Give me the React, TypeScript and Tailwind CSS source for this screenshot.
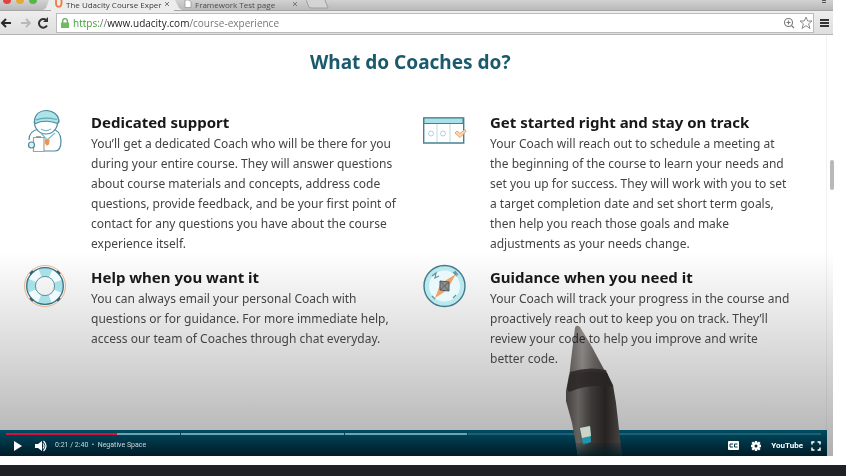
import React from "react";

function CoachIcon() {
  return (
    <svg viewBox="0 0 44 44" className="h-11 w-11" fill="none" stroke="#4d8a9b" strokeWidth="1.2">
      <path d="M5 31c0-6 4-10 10-11h13c6 1 9 5 9 12 0 6-2 10-6 10H14" fill="#fff" />
      <circle cx="22" cy="13.500" r="11.500" fill="#fff" />
      <path d="M10.500 12C11 5 16 1.500 22.500 1.500S34 6 34.500 10c1 2 .5 3.500-1 4.500-6-2.500-15-3.500-22 0-1.500-.5-1.500-1.500-1-2.500z" fill="#aee3ea" />
      <path d="M12 11c6-2.500 14-2 21-.5" stroke="#64a9b6" />
      <path d="M17 20c3 2 7 2 10 0" stroke="#79bac7" />
      <path d="M17 24l6 7 8-7" stroke="#77bdc8" />
      <path d="M21.500 31h3.500l-.5 4-1.500 1-1.500-2z" fill="#ee9448" stroke="#ee9448" />
      <path d="M9.500 28.500h10.500v14H9.500z" fill="#fff" stroke="#a8a09b" />
      <path d="M12 28h5" stroke="#8e8e8e" strokeWidth="1.600" />
      <circle cx="7.500" cy="36" r="3" fill="#d7f4f7" />
    </svg>
  );
}

function RingIcon() {
  return (
    <svg viewBox="0 0 44 44" className="h-11 w-11" fill="none">
      <circle cx="21" cy="22" r="20.500" stroke="#eab394" />
      <circle cx="21" cy="22" r="14" stroke="#effbfc" strokeWidth="9" />
      <circle cx="21" cy="22" r="14" stroke="#a9dfe7" strokeWidth="9" strokeDasharray="11 11" strokeDashoffset="5.500" />
      <circle cx="21" cy="22" r="18.300" stroke="#387282" strokeWidth="1.300" />
      <circle cx="21" cy="22" r="9.600" stroke="#58929e" strokeWidth="1" />
      <path d="M6 10l3-3M33 7l3 3M6 34l3 3M33 37l3-3" stroke="#315f6d" strokeWidth="2" />
    </svg>
  );
}

function CalendarIcon() {
  return (
    <svg viewBox="0 0 44 44" className="h-11 w-11" fill="none">
      <path d="M.7 9h40v25H.7z" fill="#fff" stroke="#438290" strokeWidth="1.400" />
      <path d="M1 9h39v5.500H1z" fill="#a8e2e8" stroke="#438290" />
      <path d="M14 15v18M27 15v18" stroke="#b9dce1" />
      <circle cx="8" cy="24.500" r="2.500" stroke="#b4cbe0" />
      <circle cx="20" cy="24.500" r="2.500" stroke="#b4cbe0" />
      <path d="M32 24l2-2 3 2.500 5-4 1 2-6 6z" fill="#fbd9b8" stroke="#eaa261" />
    </svg>
  );
}

function CompassIcon() {
  return (
    <svg viewBox="0 0 44 44" className="h-11 w-11" fill="none">
      <circle cx="21.500" cy="22" r="20.500" fill="#b9e8ee" stroke="#43798a" strokeWidth="1.400" />
      <circle cx="21.500" cy="22" r="15.500" fill="#e9f8fa" />
      <path d="M12 34l5-13 6 6zM33 10L20 18l5 6z" fill="#f2a267" />
      <path d="M17 17l9 1v9l-9-1z" fill="#8b8d90" stroke="#56595e" />
      <path d="M17 17l9 10M26 18l-9 8" stroke="#55595d" strokeWidth=".8" />
      <path d="M9 12l4-3-1 5 4-2M30 8l3 3-1-4 3 4M9 32l3 3M30 34l3-3" stroke="#69909a" strokeWidth="1.200" />
    </svg>
  );
}

type Feature = { title: string; lines: string[]; Icon: () => React.JSX.Element };

const features: Feature[] = [
  {
    title: "Dedicated support",
    Icon: CoachIcon,
    lines: [
      "You’ll get a dedicated Coach who will be there for you",
      "during your entire course. They will answer questions",
      "about course materials and concepts, address code",
      "questions, provide feedback, and be your first point of",
      "contact for any questions you have about the course",
      "experience itself.",
    ],
  },
  {
    title: "Get started right and stay on track",
    Icon: CalendarIcon,
    lines: [
      "Your Coach will reach out to schedule a meeting at",
      "the beginning of the course to learn your needs and",
      "set you up for success. They will work with you to set",
      "a target completion date and set short term goals,",
      "then help you reach those goals and make",
      "adjustments as your needs change.",
    ],
  },
  {
    title: "Help when you want it",
    Icon: RingIcon,
    lines: [
      "You can always email your personal Coach with",
      "questions or for guidance. For more immediate help,",
      "access our team of Coaches through chat everyday.",
    ],
  },
  {
    title: "Guidance when you need it",
    Icon: CompassIcon,
    lines: [
      "Your Coach will track your progress in the course and",
      "proactively reach out to keep you on track. They’ll",
      "review your code to help you improve and write",
      "better code.",
    ],
  },
];

function Browser() {
  return (
    <header className="font-['Open_Sans',sans-serif]">
      <div className="flex h-[11px] items-start border-b border-[#a5a5a5] bg-gradient-to-b from-[#d2d2d2] to-[#b9b9b9]">
        <div className="flex w-[43px] gap-[5px] pl-[3px]">
          <span className="h-1 w-2 rounded-b-full bg-[#e0443e]" />
          <span className="h-1 w-2 rounded-b-full bg-[#e6a935]" />
          <span className="h-1 w-2 rounded-b-full bg-[#55b748]" />
        </div>
        <svg viewBox="0 0 8 10" className="h-2.5 w-2"><path d="M8 0H6L3 8 0 10h8z" fill="#ececec" /></svg>
        <div className="flex h-[11px] w-[123px] items-start bg-[#ececec] pl-1 text-[8px] leading-[9px] text-[#3c3c3c]">
          <svg viewBox="0 0 8 8" className="mr-[3px] h-2 w-2 shrink-0" fill="none" stroke="#ee7b43" strokeWidth="1.800"><path d="M1 0v3c0 5 5.500 5 5.500 0V0" /></svg>
          <span className="flex-1 whitespace-nowrap">The Udacity Course Exper</span>
          <button aria-label="Close tab" className="mr-1 text-[#777]">
            <svg viewBox="0 0 6 6" className="mt-px h-1.5 w-1.5" stroke="currentColor"><path d="M1 1l4 4M5 1L1 5" /></svg>
          </button>
        </div>
        <svg viewBox="0 0 8 10" className="h-2.5 w-2"><path d="M0 0h1l4 8 3 2H0z" fill="#ececec" /></svg>
        <div className="flex w-[124px] items-start pl-0.5 text-[8px] leading-[9px] text-[#4c4c4c]">
          <svg viewBox="0 0 8 8" className="mr-[3px] h-2 w-2 shrink-0"><path d="M1 0h4l2 2v5.500H1z" fill="#fff" stroke="#999" strokeWidth=".8" /></svg>
          <span className="flex-1 whitespace-nowrap">Framework Test page</span>
          <button aria-label="Close tab" className="mr-2 text-[#777]">
            <svg viewBox="0 0 6 6" className="mt-px h-1.5 w-1.5" stroke="currentColor"><path d="M1 1l4 4M5 1L1 5" /></svg>
          </button>
        </div>
        <svg viewBox="0 0 24 10" className="h-2.5 w-6" fill="#d4d4d4" stroke="#9e9e9e"><path d="M0 0l3 7q1 1 3 1h16L19 0" /></svg>
        <svg viewBox="0 0 6 4" className="mr-1.5 ml-auto h-1 w-1.5" stroke="#555"><path d="M1 .5h4M1 2.500h4" /></svg>
      </div>
      <div className="flex h-6 items-center border-b border-[#b5b5b5] bg-gradient-to-b from-[#eee] to-[#dedede] pr-1">
        <button aria-label="Back" className="flex w-[18px] justify-start text-[#292929]">
          <svg viewBox="0 0 12 10" className="h-2.5 w-3" fill="none" stroke="currentColor" strokeWidth="2"><path d="M11 5H3M6 1L2 5l4 4" /></svg>
        </button>
        <button aria-label="Forward" className="flex w-[18px] text-[#b8b8b8]">
          <svg viewBox="0 0 12 10" className="ml-0.5 h-2.5 w-3" fill="none" stroke="currentColor" strokeWidth="1.800"><path d="M1 5h8M6 1l4 4-4 4" /></svg>
        </button>
        <button aria-label="Reload" className="flex w-5 text-[#333]">
          <svg viewBox="0 0 12 12" className="ml-px h-3 w-3" fill="none" stroke="currentColor" strokeWidth="2"><path d="M10 8.500A4.300 4.300 0 1 1 9 3" /><path d="M11 0v5H6z" fill="currentColor" stroke="none" /></svg>
        </button>
        <div className="flex h-5 flex-1 items-center border border-[#bbb] bg-white px-1">
          <svg viewBox="0 0 8 10" className="h-2.5 w-2"><path d="M1.700 5V3a2.300 2.300 0 0 1 4.600 0v2" fill="none" stroke="#62ad57" strokeWidth="1.300" /><path d="M0 4.500h8V10H0z" fill="#6fbb62" /></svg>
          <div className="ml-1 flex-1 text-[10px] leading-4 text-[#777]"><span className="text-[#3ea338]">https:</span>//<span className="text-[#222]">www.udacity.com</span>/course-experience</div>
          <svg viewBox="0 0 12 12" className="mr-1 h-3 w-3" fill="none" stroke="#777" strokeWidth="1.100"><circle cx="5.500" cy="5.500" r="4" /><path d="M8.500 8.500L11 11M3.500 5.500h4M5.500 3.500v4" /></svg>
          <svg viewBox="0 0 14 14" className="-mr-1 h-3.5 w-3.5" fill="#fff" stroke="#8a8a8a"><path d="M7 1l1.700 4H13L9.600 7.800 11 12.500 7 9.700 3 12.500l1.400-4.700L1 5h4.300z" /></svg>
        </div>
        <button aria-label="Menu" className="ml-1.5 flex w-[9px] flex-col gap-px"><span className="h-0.5 w-full bg-[#333]" /><span className="h-0.5 w-full bg-[#333]" /><span className="h-0.5 w-full bg-[#333]" /></button>
      </div>
    </header>
  );
}

function Pen() {
  return (
    <svg viewBox="0 0 60 132" aria-hidden="true" className="pointer-events-none absolute bottom-0 left-[68%] h-[132px] w-[60px]">
      <defs>
        <linearGradient id="barrel" x1="0" x2="1"><stop stopColor="#45403e" /><stop offset=".22" stopColor="#66625f" /><stop offset=".45" stopColor="#3d3937" /><stop offset=".7" stopColor="#252221" /><stop offset="1" stopColor="#4a4644" /></linearGradient>
        <linearGradient id="tip" x1="0" x2="1"><stop stopColor="#716c69" /><stop offset=".35" stopColor="#a09b98" /><stop offset=".65" stopColor="#77716e" /><stop offset="1" stopColor="#5a5552" /></linearGradient>
        <linearGradient id="shade" x1="0" x2="0" y1="0" y2="1"><stop stopColor="#04222c" stopOpacity=".2" /><stop offset="1" stopColor="#001c20" stopOpacity=".85" /></linearGradient>
      </defs>
      <path d="M9 4q1-4 5-1l12 20 15 28v3H3l2-18z" fill="url(#tip)" className="mix-blend-multiply" />
      <path d="M3 51q19-6 38-2l6 12 3 18 6 53H12L6 99 0 77V67z" fill="url(#barrel)" />
      <path d="M4 48q18-6 36-2l6 16q-24-2-43 6l-2-3z" fill="#2a2624" opacity=".85" />
      <path d="M14 104l10-2 1 16-8 3z" fill="#1f95ae" />
      <path d="M14 104l10-2 1 10-9 2z" fill="#ced3c6" />
      <path d="M17 107h44v25H12l-2-12 7 1 8-3-1-11z" fill="none" />
      <path d="M10 119h45l1 13H12z" fill="url(#shade)" />
    </svg>
  );
}

function Controls() {
  return (
    <div className="mr-[6px] bg-gradient-to-b from-[#004b61] to-[#001c27]">
      <div role="progressbar" aria-label="Playback" aria-valuenow={13} className="mx-1.5 flex gap-px pt-[3px]">
        <span className="h-0.5 w-[13.600%] bg-[#d4123f]" />
        <span className="-ml-px h-0.5 w-[7.700%] bg-[#6fa3b0]" />
        <span className="h-0.5 w-[20%] bg-[#6fa3b0]" />
        <span className="h-0.5 w-[15%] bg-[#6fa3b0]" />
        <span className="h-0.5 flex-1 bg-[#1d6176]" />
      </div>
      <div className="flex h-[21px] items-center pl-3.5 pr-1.5 font-['Roboto',sans-serif] text-[7px] text-[#c8d5da]">
        <button aria-label="Play"><svg viewBox="0 0 8 10" className="h-2.5 w-2" fill="#fff"><path d="M0 0l8 5-8 5z" /></svg></button>
        <button aria-label="Mute" className="ml-[13px]"><svg viewBox="0 0 12 12" className="h-3 w-3" fill="#fff"><path d="M0 4h3l4-3v10L3 8H0z" /><path d="M8 3.500q2 2.500 0 5M8.500 1q5 5 0 10" fill="none" stroke="#fff" strokeWidth="1.200" /></svg></button>
        <span className="ml-2 whitespace-nowrap">0:21 / 2:40 &nbsp;• &nbsp;Negative Space</span>
        <button aria-label="Captions" className="ml-auto"><svg viewBox="0 0 11 9" className="h-[9px] w-[11px]"><rect width="11" height="9" rx="1" fill="#fff" /><path d="M5 3H2v3h3M9.500 3h-3v3h3" fill="none" stroke="#0b3444" /></svg></button>
        <button aria-label="Settings" className="ml-3"><svg viewBox="0 0 12 12" className="h-2.5 w-2.5"><path d="M6 0v12M0 6h12M1.500 1.500l9 9M10.500 1.500l-9 9" stroke="#fff" strokeWidth="2.800" /><circle cx="6" cy="6" r="4.500" fill="#fff" /><circle cx="6" cy="6" r="1.800" fill="#07303f" /></svg></button>
        <a href="#youtube" className="ml-2.5 text-[8px] font-bold text-white">YouTube</a>
        <button aria-label="Full screen" className="ml-2"><svg viewBox="0 0 10 10" className="h-2.5 w-2.5" fill="none" stroke="#fff" strokeWidth="1.500"><path d="M1 3.500V1h2.500M6.500 1H9v2.500M9 6.500V9H6.500M3.500 9H1V6.500" /></svg></button>
      </div>
    </div>
  );
}

export default function App() {
  return (
    <div className="min-h-screen bg-[#202124]">
      <div className="bg-white pb-[9px] pr-[13px]">
        <div className="relative bg-gradient-to-b from-white from-55% via-[#d8d8d8] via-78% to-[#b0b0b0]">
          <Browser />
          <main className="mr-[6px] border-r border-black/5 pb-[61px] font-['Noto_Sans',sans-serif]">
            <h1 className="pt-[13px] pl-[310px] text-[19px] leading-7 font-bold whitespace-nowrap text-[#1b5a6c]">What do Coaches do?</h1>
            <div className="grid grid-cols-[399px_1fr] gap-y-3 pt-[35px] pl-6">
              {features.map(({ title, lines, Icon }) => (
                <section key={title} className="flex gap-[23px]">
                  <div className="-mt-0.5 shrink-0"><Icon /></div>
                  <div className="whitespace-nowrap">
                    <h2 className="text-[15px] leading-[22px] font-bold text-[#181818]">{title}</h2>
                    <p className="pt-px text-[12px] leading-5 text-[#444]">
                      {lines.map((line) => (<span key={line} className="block">{line}</span>))}
                    </p>
                  </div>
                </section>
              ))}
            </div>
          </main>
          <Controls />
          <Pen />
          <span className="absolute top-[160px] -right-px h-[30px] w-1 rounded-sm bg-[#b9b9b9]" />
        </div>
      </div>
    </div>
  );
}
